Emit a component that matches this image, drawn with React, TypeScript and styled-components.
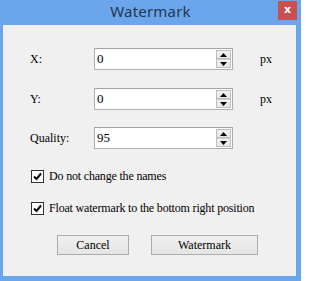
import React from 'react';
import styled, { createGlobalStyle } from 'styled-components';

const GlobalStyle = createGlobalStyle`
  html, body {
    margin: 0;
    padding: 0;
    background: #ffffff;
  }
`;

const Frame = styled.div`
  width: 301px;
  height: 281px;
  background: #6ba6ec;
  display: flex;
  flex-direction: column;
  box-sizing: border-box;
`;

const TitleBar = styled.div`
  height: 25px;
  display: grid;
  grid-template-columns: 1fr auto 1fr;
  align-items: start;
`;

const Title = styled.div`
  grid-column: 2;
  font-family: 'Noto Sans', 'Open Sans', sans-serif;
  font-size: 15px;
  line-height: 23px;
  color: #22354f;
  letter-spacing: 0.2px;
`;

const CloseButton = styled.div`
  grid-column: 3;
  justify-self: end;
  margin: 1px 4px 0 0;
  width: 19px;
  height: 19px;
  background: #c75050;
  color: #ffffff;
  font-family: 'DejaVu Sans', sans-serif;
  font-weight: bold;
  font-size: 11px;
  line-height: 17px;
  text-align: center;
`;

const Client = styled.div`
  flex: 1;
  margin: 0 5px 5px 3px;
  background: #f0f0f0;
  padding: 23px 0 0 24px;
  display: flex;
  flex-direction: column;
  font-family: 'Liberation Serif', 'Times New Roman', serif;
  font-size: 12px;
  color: #000000;
`;

const FieldRow = styled.div<{ $gap: number }>`
  display: grid;
  grid-template-columns: 67px 139px auto;
  align-items: center;
  height: 22px;
  margin-bottom: ${(p) => p.$gap}px;
`;

const Label = styled.span`
  padding-left: 3px;
  line-height: 22px;
`;

const SpinBox = styled.div`
  box-sizing: border-box;
  height: 22px;
  border: 1px solid #abadb3;
  border-top-color: #a3a3a3;
  background: #ffffff;
  display: flex;
  align-items: stretch;
  padding: 1px;
`;

const SpinValue = styled.span`
  flex: 1;
  font-size: 13px;
  line-height: 18px;
  padding-left: 1px;
`;

const Arrows = styled.div`
  width: 15px;
  display: flex;
  flex-direction: column;
`;

const ArrowButton = styled.div`
  flex: 1;
  box-sizing: border-box;
  border: 1px solid #bdbdbd;
  background: linear-gradient(#f2f2f2, #e6e6e6);
  display: flex;
  align-items: center;
  justify-content: center;

  & + & {
    border-top-color: #d0d0d0;
  }
`;

const Unit = styled.span`
  margin-left: 27px;
  line-height: 22px;
`;

const CheckRow = styled.label<{ $gap: number }>`
  display: flex;
  align-items: center;
  gap: 5px;
  margin-left: 4px;
  height: 16px;
  letter-spacing: -0.18px;
  margin-bottom: ${(p) => p.$gap}px;
`;

const CheckBox = styled.span`
  box-sizing: border-box;
  width: 13px;
  height: 13px;
  border: 1px solid #333333;
  background: #ffffff;
  display: flex;
  align-items: center;
  justify-content: center;
`;

const ButtonRow = styled.div`
  display: flex;
  gap: 22px;
  margin-left: 30px;
`;

const PushButton = styled.button<{ $width: number }>`
  box-sizing: border-box;
  width: ${(p) => p.$width}px;
  height: 20px;
  padding: 0;
  border: 1px solid #acacac;
  background: linear-gradient(#f0f0f0, #e5e5e5);
  font-family: 'Liberation Serif', 'Times New Roman', serif;
  font-size: 12px;
  color: #000000;
`;

const Up = () => (
  <svg width="7" height="4" viewBox="0 0 7 4">
    <path d="M0 4 L3.5 0 L7 4 Z" fill="#000" />
  </svg>
);

const Down = () => (
  <svg width="7" height="4" viewBox="0 0 7 4">
    <path d="M0 0 L3.5 4 L7 0 Z" fill="#000" />
  </svg>
);

const Check = () => (
  <svg width="9" height="9" viewBox="0 0 9 9">
    <path d="M1 4.5 L3.5 7 L8 1.5" stroke="#000" strokeWidth="2" fill="none" />
  </svg>
);

const Field: React.FC<{ label: string; value: string; unit?: string; gap: number }> = ({
  label,
  value,
  unit,
  gap,
}) => (
  <FieldRow $gap={gap}>
    <Label>{label}</Label>
    <SpinBox>
      <SpinValue>{value}</SpinValue>
      <Arrows>
        <ArrowButton>
          <Up />
        </ArrowButton>
        <ArrowButton>
          <Down />
        </ArrowButton>
      </Arrows>
    </SpinBox>
    {unit && <Unit>{unit}</Unit>}
  </FieldRow>
);

export default function App() {
  return (
    <>
      <GlobalStyle />
      <Frame>
        <TitleBar>
          <Title>Watermark</Title>
          <CloseButton>x</CloseButton>
        </TitleBar>
        <Client>
          <Field label="X:" value="0" unit="px" gap={18} />
          <Field label="Y:" value="0" unit="px" gap={17} />
          <Field label="Quality:" value="95" gap={19} />
          <CheckRow $gap={16}>
            <CheckBox>
              <Check />
            </CheckBox>
            Do not change the names
          </CheckRow>
          <CheckRow $gap={19}>
            <CheckBox>
              <Check />
            </CheckBox>
            Float watermark to the bottom right position
          </CheckRow>
          <ButtonRow>
            <PushButton $width={72}>Cancel</PushButton>
            <PushButton $width={107}>Watermark</PushButton>
          </ButtonRow>
        </Client>
      </Frame>
    </>
  );
}
